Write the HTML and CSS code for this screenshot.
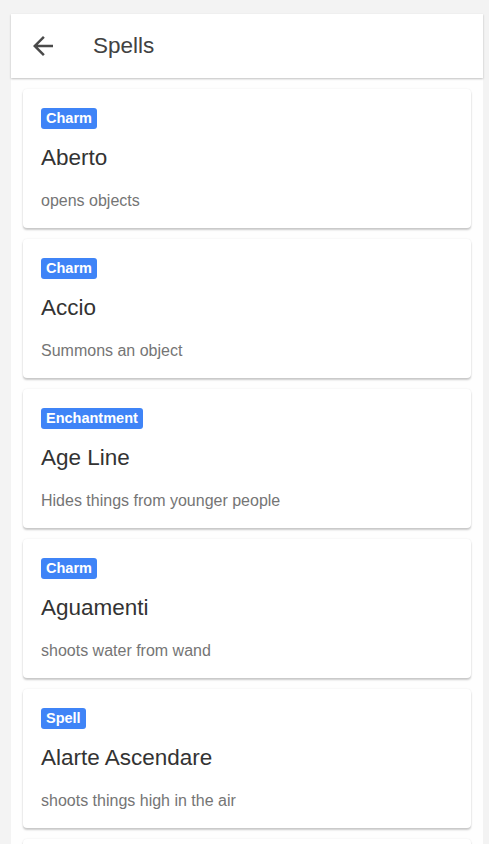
FILE: index.html
```html
<!DOCTYPE html>
<html>
<head>
<meta charset="utf-8">
<link rel="stylesheet" href="styles.css">
</head>
<body>
<div class="app">
  <header class="toolbar">
    <span class="back">
      <svg width="30" height="30" viewBox="0 0 24 24"><path d="M20 11H7.83l5.59-5.59L12 4l-8 8 8 8 1.41-1.41L7.83 13H20v-2z" fill="#4a4a4a"/></svg>
    </span>
    <h1 class="title">Spells</h1>
  </header>
  <main class="list">
    <div class="card"><span class="badge">Charm</span><div class="name">Aberto</div><div class="desc">opens objects</div></div>
    <div class="card"><span class="badge">Charm</span><div class="name">Accio</div><div class="desc">Summons an object</div></div>
    <div class="card"><span class="badge">Enchantment</span><div class="name">Age Line</div><div class="desc">Hides things from younger people</div></div>
    <div class="card"><span class="badge">Charm</span><div class="name">Aguamenti</div><div class="desc">shoots water from wand</div></div>
    <div class="card"><span class="badge">Spell</span><div class="name">Alarte Ascendare</div><div class="desc">shoots things high in the air</div></div>
    <div class="card"></div>
  </main>
</div>
</body>
</html>
```
FILE: styles.css
```css
html, body {
  margin: 0;
  padding: 0;
  background: #f3f3f3;
  height: 844px;
  overflow: hidden;
  font-family: "Liberation Sans", Arial, sans-serif;
}
.app {
  margin: 14px 6px 0 11px;
  background: #fefefe;
  min-height: 830px;
}
.toolbar {
  height: 64px;
  display: flex;
  align-items: center;
  background: #fff;
  box-shadow: 0 1px 2px rgba(0,0,0,0.25);
  position: relative;
  z-index: 1;
}
.back {
  width: 30px;
  height: 30px;
  margin-left: 17px;
  display: flex;
}
.title {
  margin: 0 0 0 35px;
  font-size: 22.5px;
  font-weight: 400;
  color: #424242;
}
.list {
  padding: 11px 12px 0 12px;
  display: flex;
  flex-direction: column;
  gap: 11px;
}
.card {
  background: #fff;
  border-radius: 4px;
  box-shadow: 0 2px 2px rgba(0,0,0,0.2), 0 0 2px rgba(0,0,0,0.08);
  height: 139px;
  flex: none;
  box-sizing: border-box;
  padding: 19px 18px 0 18px;
  display: flex;
  flex-direction: column;
  align-items: flex-start;
}
.badge {
  background: #3f84f7;
  color: #fff;
  font-weight: 700;
  font-size: 14.5px;
  line-height: 21px;
  height: 21px;
  padding: 0 5px;
  border-radius: 3px;
}
.name {
  margin-top: 16px;
  font-size: 22.5px;
  line-height: 26px;
  color: #333;
}
.desc {
  margin-top: 20px;
  font-size: 16px;
  line-height: 20px;
  color: #757575;
}
```
